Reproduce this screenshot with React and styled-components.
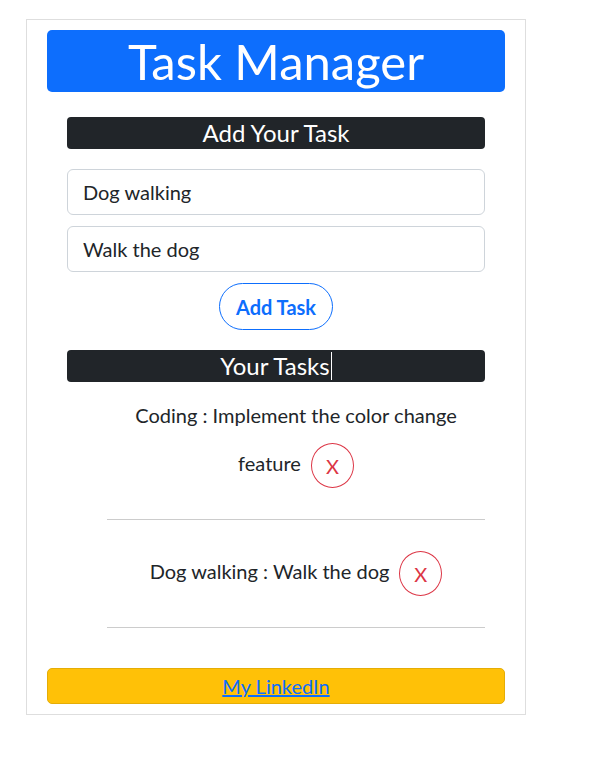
import React from 'react';
import styled, { createGlobalStyle } from 'styled-components';

const GlobalStyle = createGlobalStyle`
  body {
    margin: 8px;
    background: #fff;
    font-family: 'Lato', 'Open Sans', sans-serif;
    color: #212529;
  }
  * { box-sizing: border-box; }
`;

const tasks = [
  { title: 'Coding', desc: 'Implement the color change feature' },
  { title: 'Dog walking', desc: 'Walk the dog' },
];

const App = () => (
  <>
    <GlobalStyle />
    <Card>
      <Header>Task Manager</Header>
      <Section>
        <Bar>Add Your Task</Bar>
        <Input defaultValue="Dog walking" />
        <Input defaultValue="Walk the dog" />
        <Center>
          <AddButton>Add Task</AddButton>
        </Center>
        <Bar $top="20px">
          Your Tasks<Caret />
        </Bar>
        <List>
          {tasks.map((t) => (
            <Item key={t.title}>
              {t.title} : {t.desc}
              <DeleteButton>X</DeleteButton>
            </Item>
          ))}
        </List>
      </Section>
      <Footer>
        <a href="#linkedin">My LinkedIn</a>
      </Footer>
    </Card>
  </>
);

const Card = styled.div`
  width: 500px;
  margin: 11px 0 0 18px;
  padding: 10px 20px 10px;
  border: 1px solid #dedede;
`;

const Header = styled.h1`
  margin: 0;
  height: 62px;
  background: #0d6efd;
  border-radius: 5px;
  color: #fff;
  font-size: 49px;
  font-weight: 400;
  line-height: 62px;
  text-align: center;
`;

const Section = styled.div`
  margin: 0 20px;
`;

const Bar = styled.div`
  margin-top: ${(p) => p.$top || '25px'};
  height: 32px;
  background: #212529;
  border-radius: 4px;
  color: #fff;
  font-size: 24px;
  line-height: 32px;
  text-align: center;
`;

const Caret = styled.span`
  display: inline-block;
  width: 1px;
  height: 28px;
  margin-left: 1px;
  vertical-align: -5px;
  background: #fff;
`;

const Input = styled.input`
  display: block;
  width: 100%;
  height: 46px;
  margin-top: 20px;
  padding: 0 15px;
  border: 1px solid #ced4da;
  border-radius: 6px;
  font-family: inherit;
  font-size: 20px;
  color: #212529;

  & + & {
    margin-top: 11px;
  }
`;

const Center = styled.div`
  display: flex;
  justify-content: center;
  margin-top: 11px;
`;

const AddButton = styled.button`
  width: 114px;
  height: 47px;
  border: 1px solid #0d6efd;
  border-radius: 24px;
  background: #fff;
  color: #0d6efd;
  font-family: inherit;
  font-size: 20px;
  font-weight: 700;
`;

const List = styled.ul`
  list-style: none;
  margin: 6px 0 0;
  padding: 0 0 0 40px;
`;

const Item = styled.li`
  padding: 15px 0;
  border-bottom: 1px solid #cccccc;
  font-size: 20px;
  text-align: center;
`;

const DeleteButton = styled.button`
  width: 43px;
  height: 45px;
  margin: 16px 0 16px 10px;
  border: 1px solid #dc3545;
  border-radius: 50%;
  background: #fff;
  color: #dc3545;
  font-family: inherit;
  font-size: 20px;
  vertical-align: middle;
`;

const Footer = styled.div`
  margin-top: 40px;
  height: 36px;
  background: #ffc107;
  border: 1px solid #e5ad06;
  border-radius: 5px;
  font-size: 20px;
  line-height: 34px;
  text-align: center;

  a {
    color: #0d6efd;
  }
`;

export default App;
